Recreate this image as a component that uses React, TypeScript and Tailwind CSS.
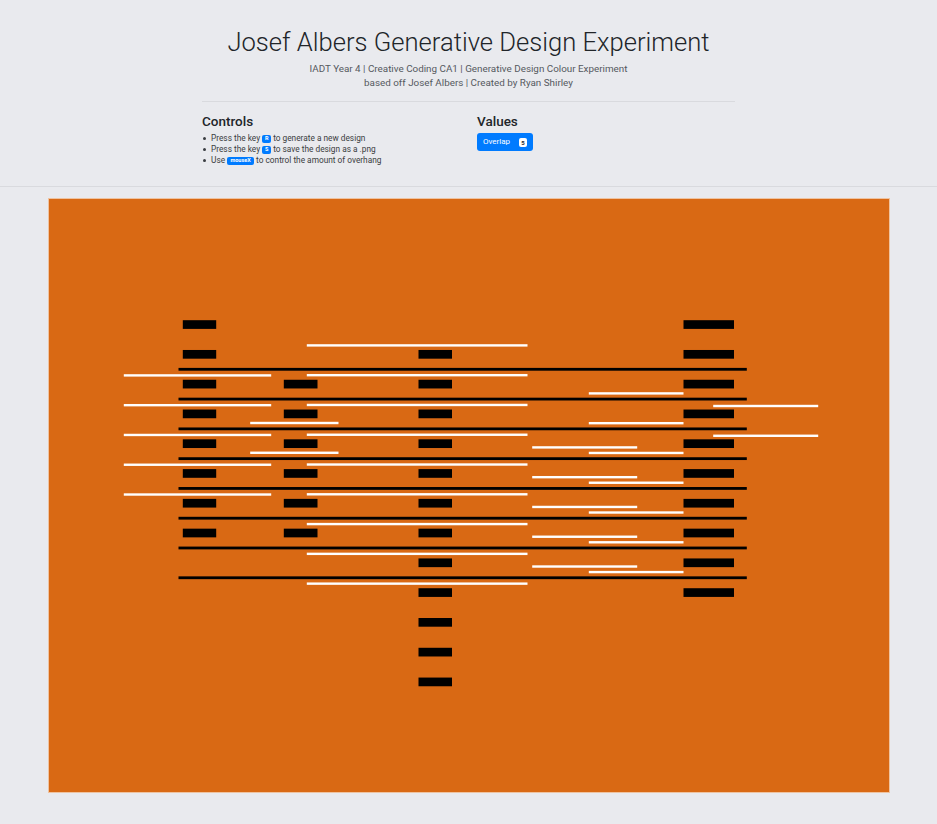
const STEP = 29.78;

type Group = { x: number; y: number; w: number; h: number; from: number; to: number; fill: string };

// canvas drawing, coordinates relative to the canvas origin
const groups: Group[] = [
  { x: 134.8, y: 122.2, w: 33.4, h: 8.7, from: 0, to: 7, fill: "#000" },
  { x: 235.8, y: 122.2, w: 33.7, h: 8.7, from: 2, to: 7, fill: "#000" },
  { x: 370.5, y: 122.2, w: 33.5, h: 8.7, from: 1, to: 12, fill: "#000" },
  { x: 635.5, y: 122.2, w: 50.5, h: 8.7, from: 0, to: 9, fill: "#000" },
  { x: 130.5, y: 169.9, w: 568.3, h: 2.8, from: 0, to: 7, fill: "#000" },
  { x: 75.8, y: 176.2, w: 147.4, h: 2.4, from: 0, to: 4, fill: "#fff" },
  { x: 258.8, y: 146.2, w: 220.7, h: 2.4, from: 0, to: 8, fill: "#fff" },
  { x: 202.2, y: 223.8, w: 88.3, h: 2.4, from: 0, to: 1, fill: "#fff" },
  { x: 540.8, y: 194.2, w: 94.7, h: 2.4, from: 0, to: 6, fill: "#fff" },
  { x: 484.2, y: 248.2, w: 105, h: 2.4, from: 0, to: 4, fill: "#fff" },
  { x: 665.2, y: 206.8, w: 105, h: 2.4, from: 0, to: 1, fill: "#fff" },
];

function Badge({ children }: { children: React.ReactNode }) {
  return (
    <span className="inline-flex items-center justify-center min-w-[9px] h-[8px] px-[2px] rounded-[2px] bg-[#007bff] text-white text-[5.5px] font-bold leading-none mx-[2px]">
      {children}
    </span>
  );
}

function Canvas() {
  return (
    <div className="mx-auto mt-[11px] w-[842px] h-[595px] bg-[#d96914] border border-[#efc3a0]">
      <svg width="840" height="593" viewBox="1 1 840 593">
        {groups.map((g, i) =>
          Array.from({ length: g.to - g.from + 1 }, (_, j) => (
            <rect
              key={`${i}-${j}`}
              x={g.x}
              y={g.y + (g.from + j) * STEP}
              width={g.w}
              height={g.h}
              fill={g.fill}
            />
          ))
        )}
      </svg>
    </div>
  );
}

export default function App() {
  return (
    <div className="min-h-screen bg-[#e9eaee] pb-[30px]" style={{ fontFamily: "Roboto, 'Noto Sans', sans-serif" }}>
      <header className="border-b border-[#d9dade] pt-[24px] pb-[20px]">
        <h1 className="text-center text-[25.6px] font-light leading-[36px] text-[#212529]">
          Josef Albers Generative Design Experiment
        </h1>
        <p className="mt-[2px] text-center text-[9.85px] leading-[14px] text-[#55595e]">
          IADT Year 4 | Creative Coding CA1 | Generative Design Colour Experiment
          <br />
          based off Josef Albers | Created by Ryan Shirley
        </p>
        <div className="mx-auto mt-[11px] w-[533px] border-t border-[#d9dade] pt-[10px] grid grid-cols-2 gap-x-[17px]">
          <div>
            <h2 className="text-[13.5px] font-medium leading-[18px] text-[#212529]">Controls</h2>
            <ul className="mt-[3px] text-[8.3px] leading-[11px] text-[#3a3d41]">
              <li className="flex items-center">
                <span className="w-[3px] h-[3px] rounded-full bg-[#3a3d41] ml-[1px] mr-[5px]" />
                Press the key <Badge>R</Badge> to generate a new design
              </li>
              <li className="flex items-center">
                <span className="w-[3px] h-[3px] rounded-full bg-[#3a3d41] ml-[1px] mr-[5px]" />
                Press the key <Badge>S</Badge> to save the design as a .png
              </li>
              <li className="flex items-center">
                <span className="w-[3px] h-[3px] rounded-full bg-[#3a3d41] ml-[1px] mr-[5px]" />
                Use <Badge>&nbsp;mouseX&nbsp;</Badge> to control the amount of overhang
              </li>
            </ul>
          </div>
          <div>
            <h2 className="text-[13.5px] font-medium leading-[18px] text-[#212529]">Values</h2>
            <button className="mt-[3px] flex items-center justify-between h-[18px] w-[56px] pl-[6px] pr-[6px] rounded-[3px] bg-[#007bff] text-white text-[8px]">
              Overlap
              <span className="inline-flex items-center justify-center w-[8px] h-[9px] rounded-[2px] bg-white text-[#212529] text-[6px] font-bold">
                5
              </span>
            </button>
          </div>
        </div>
      </header>
      <Canvas />
    </div>
  );
}
